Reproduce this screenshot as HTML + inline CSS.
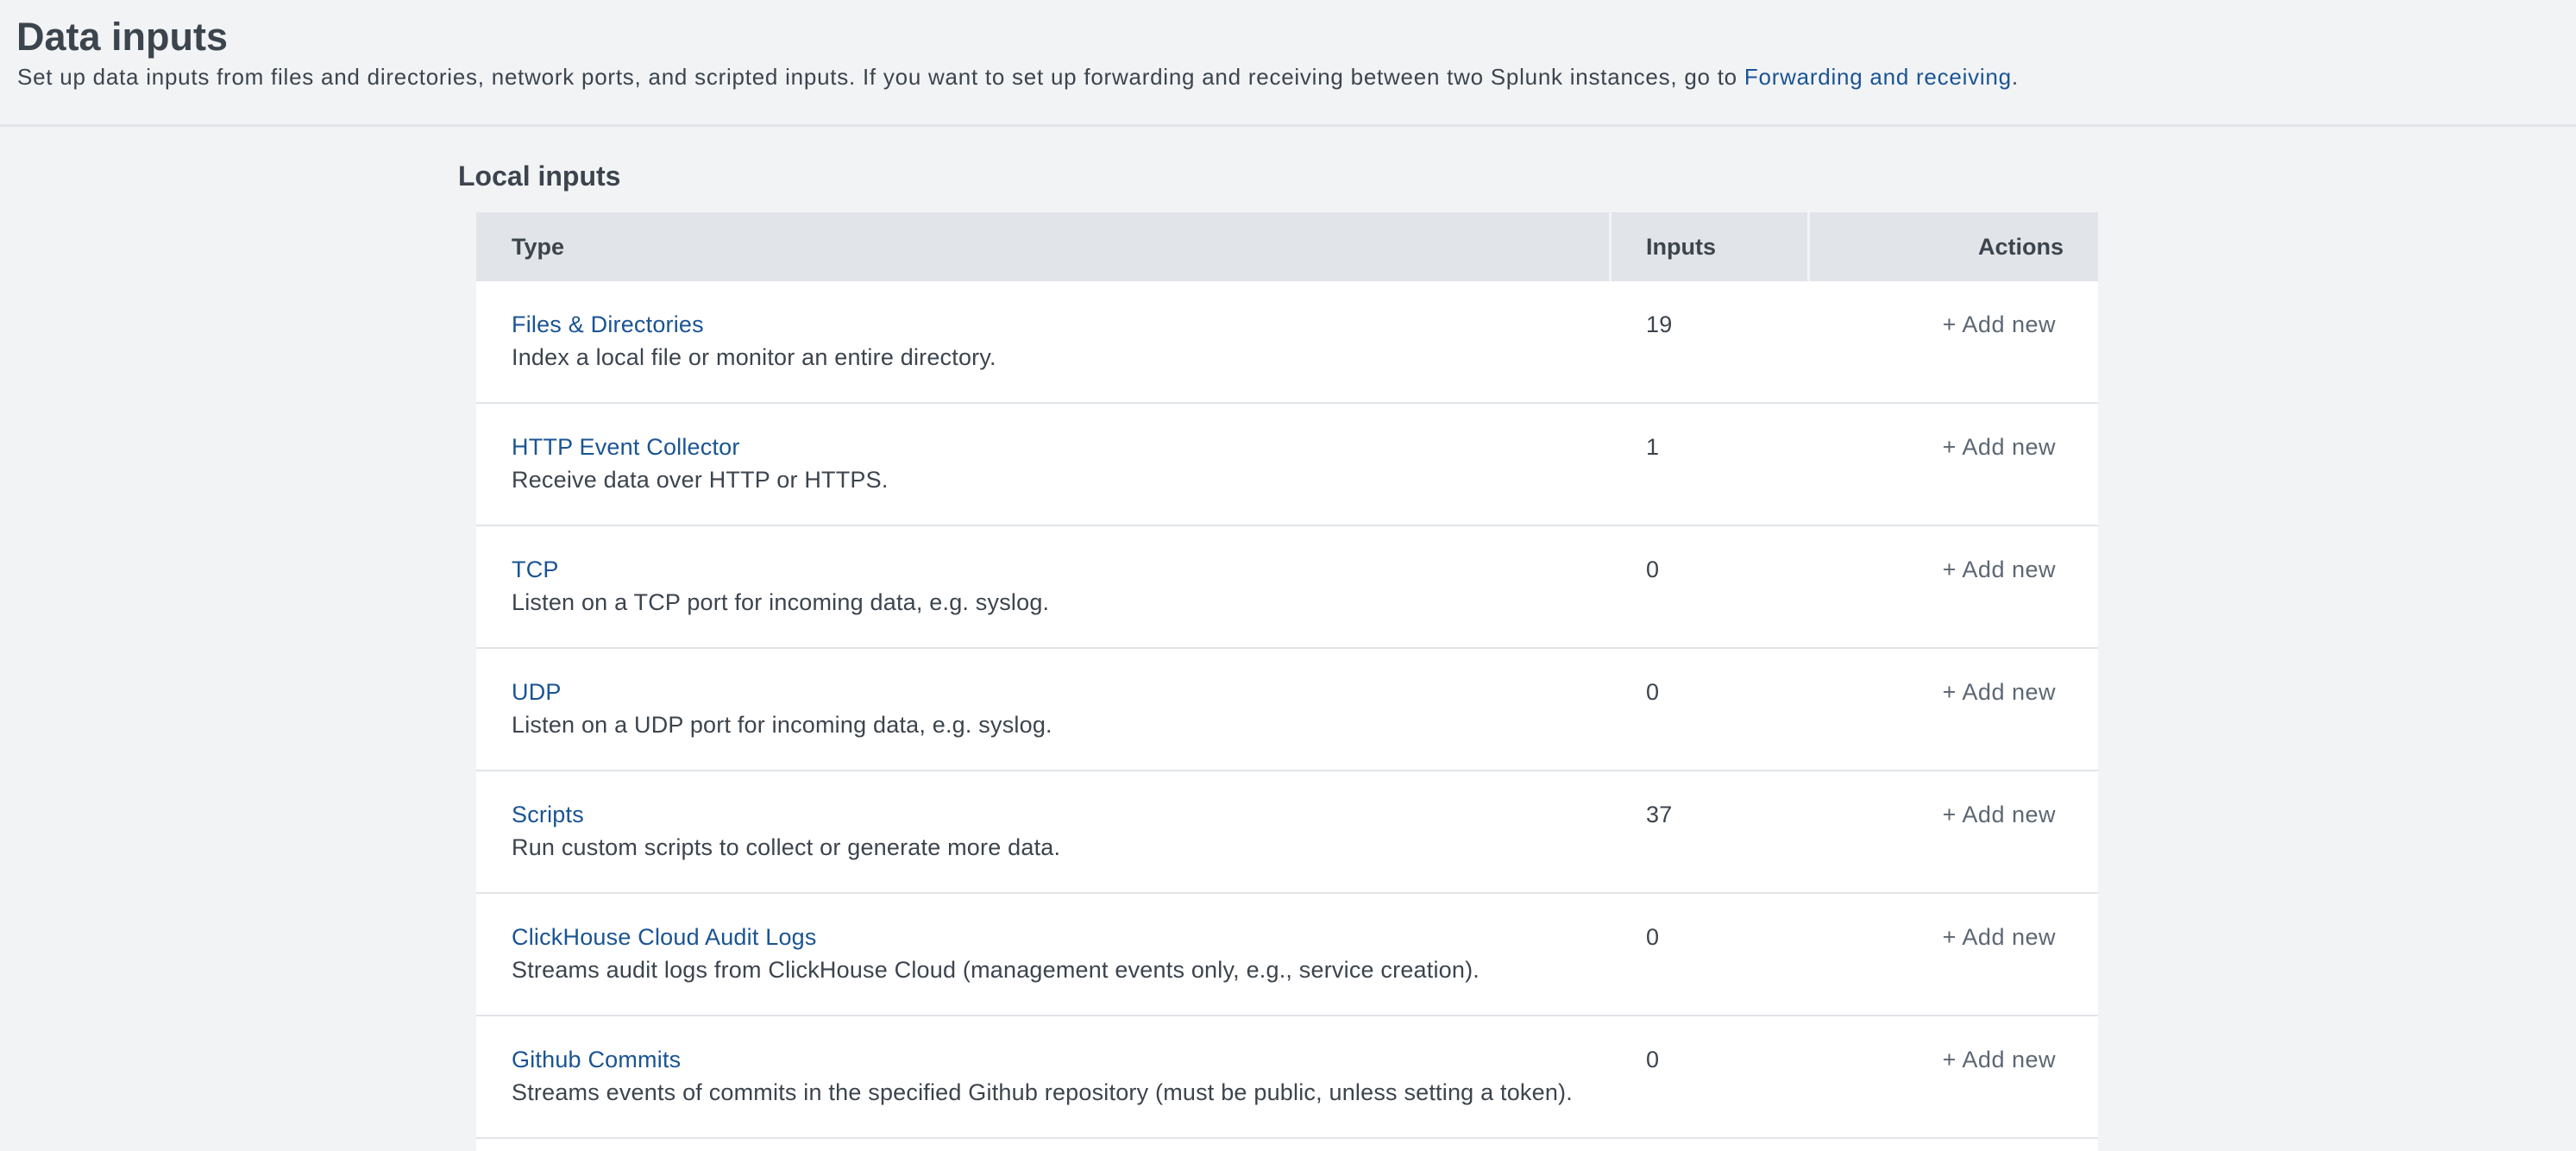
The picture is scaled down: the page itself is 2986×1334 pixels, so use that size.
<!DOCTYPE html>
<html><head><meta charset="utf-8"><style>
*{margin:0;padding:0;box-sizing:border-box}
html,body{width:2986px;height:1334px;overflow:hidden}
body{background:#f2f3f5;font-family:"Liberation Sans",sans-serif;color:#3c444d;position:relative}
.a{position:absolute;white-space:nowrap}
h1{position:absolute;left:19px;top:15px;font-size:45px;font-weight:bold;line-height:56px;color:#3c444d}
.sub{left:20px;top:71px;font-size:26px;line-height:36px;letter-spacing:0.75px}
.sub span{color:#1a5493}
.sep{position:absolute;left:0;top:144px;width:2986px;height:3px;background:#e1e4e8}
h2{position:absolute;left:531px;top:184px;font-size:32px;line-height:40px;font-weight:bold}
.tbl{position:absolute;left:552px;top:246px;width:1880px;height:1088px;background:#fff}
.hd{height:80px;background:#e1e4e8;position:relative;font-size:27px;font-weight:bold;line-height:80px}
.row{height:142px;border-bottom:2px solid #e1e4e8;position:relative;font-size:27px;line-height:38px;letter-spacing:0.2px}
.c1{position:absolute;left:41px}
.c2{position:absolute;left:1356px}
.c3{position:absolute;right:49px;text-align:right}
.row .c1,.row .c2,.row .c3{top:31px}
.row .c3{right:49px;color:#5c6773;letter-spacing:0.5px}
.lk{color:#1a5493}
.vs{position:absolute;top:0;width:3px;height:80px;background:#f2f3f5}
</style></head><body>
<h1>Data inputs</h1>
<div class="a sub">Set up data inputs from files and directories, network ports, and scripted inputs. If you want to set up forwarding and receiving between two Splunk instances, go to <span>Forwarding and receiving</span>.</div>
<div class="sep"></div>
<h2>Local inputs</h2>
<div class="tbl">
<div class="hd"><div class="c1">Type</div><div class="vs" style="left:1313px"></div><div class="c2">Inputs</div><div class="vs" style="left:1543px"></div><div class="c3" style="right:40px">Actions</div></div>
<div class="row"><div class="c1"><div class="lk">Files &amp; Directories</div><div>Index a local file or monitor an entire directory.</div></div><div class="c2">19</div><div class="c3">+ Add new</div></div>
<div class="row"><div class="c1"><div class="lk">HTTP Event Collector</div><div>Receive data over HTTP or HTTPS.</div></div><div class="c2">1</div><div class="c3">+ Add new</div></div>
<div class="row"><div class="c1"><div class="lk">TCP</div><div>Listen on a TCP port for incoming data, e.g. syslog.</div></div><div class="c2">0</div><div class="c3">+ Add new</div></div>
<div class="row"><div class="c1"><div class="lk">UDP</div><div>Listen on a UDP port for incoming data, e.g. syslog.</div></div><div class="c2">0</div><div class="c3">+ Add new</div></div>
<div class="row"><div class="c1"><div class="lk">Scripts</div><div>Run custom scripts to collect or generate more data.</div></div><div class="c2">37</div><div class="c3">+ Add new</div></div>
<div class="row"><div class="c1"><div class="lk">ClickHouse Cloud Audit Logs</div><div>Streams audit logs from ClickHouse Cloud (management events only, e.g., service creation).</div></div><div class="c2">0</div><div class="c3">+ Add new</div></div>
<div class="row"><div class="c1"><div class="lk">Github Commits</div><div>Streams events of commits in the specified Github repository (must be public, unless setting a token).</div></div><div class="c2">0</div><div class="c3">+ Add new</div></div>
</div>
</body></html>
